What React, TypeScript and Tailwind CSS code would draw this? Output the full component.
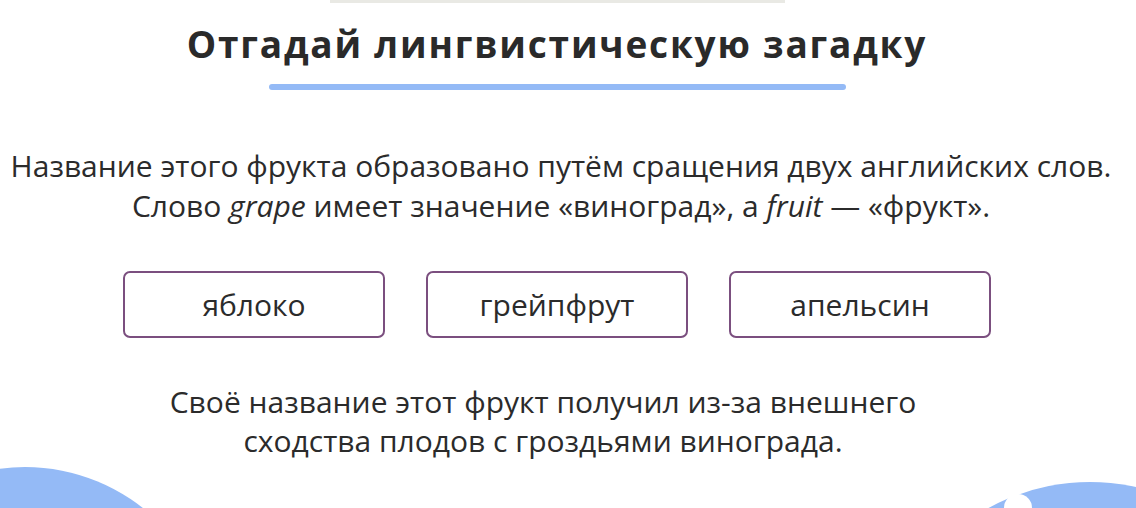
import React from "react";

const options = ["яблоко", "грейпфрут", "апельсин"];

export default function App() {
  return (
    <div
      className="relative w-[1136px] h-[508px] overflow-hidden bg-white text-[#2b2b2b]"
      style={{ fontFamily: '"Open Sans", "Noto Sans", sans-serif' }}
    >
      {/* decorative blobs */}
      <div className="absolute left-[-165px] top-[467px] w-[380px] h-[380px] rounded-full bg-[#94baf6]" />
      <div className="absolute left-[879px] top-[482px] w-[422px] h-[422px] rounded-full bg-[#94baf6]" />
      <div className="absolute left-[1004px] top-[494px] w-[28px] h-[28px] rounded-full bg-white" />

      <div className="relative w-[1114px] flex flex-col items-center">
        <div className="w-[455px] h-[3px] bg-[#e9e9e4] ml-[1px]" />
        <h1 className="mt-[16px] text-[37px] leading-[49px] font-bold tracking-[1.8px] text-[#2a2a2a]">
          Отгадай лингвистическую загадку
        </h1>
        <div className="mt-[16px] w-[577px] h-[6px] rounded-full bg-[#94baf6]" />

        <p className="mt-[56px] text-[30px] leading-[40px] text-center ml-[8px] whitespace-nowrap">
          Название этого фрукта образовано путём сращения двух английских слов.
          <br />
          Слово <i>grape</i> имеет значение «виноград», а <i>fruit</i> — «фрукт».
        </p>

        <div className="mt-[45px] flex gap-[41px]">
          {options.map((o) => (
            <button
              key={o}
              className="w-[262px] h-[67px] rounded-[7px] border-2 border-[#7b4f7f] bg-white text-[30px] text-[#2b2b2b] flex items-center justify-center"
            >
              {o}
            </button>
          ))}
        </div>

        <p className="mt-[44px] text-[30px] leading-[39px] text-center mr-[28px] whitespace-nowrap">
          Своё название этот фрукт получил из-за внешнего
          <br />
          сходства плодов с гроздьями винограда.
        </p>
      </div>
    </div>
  );
}
